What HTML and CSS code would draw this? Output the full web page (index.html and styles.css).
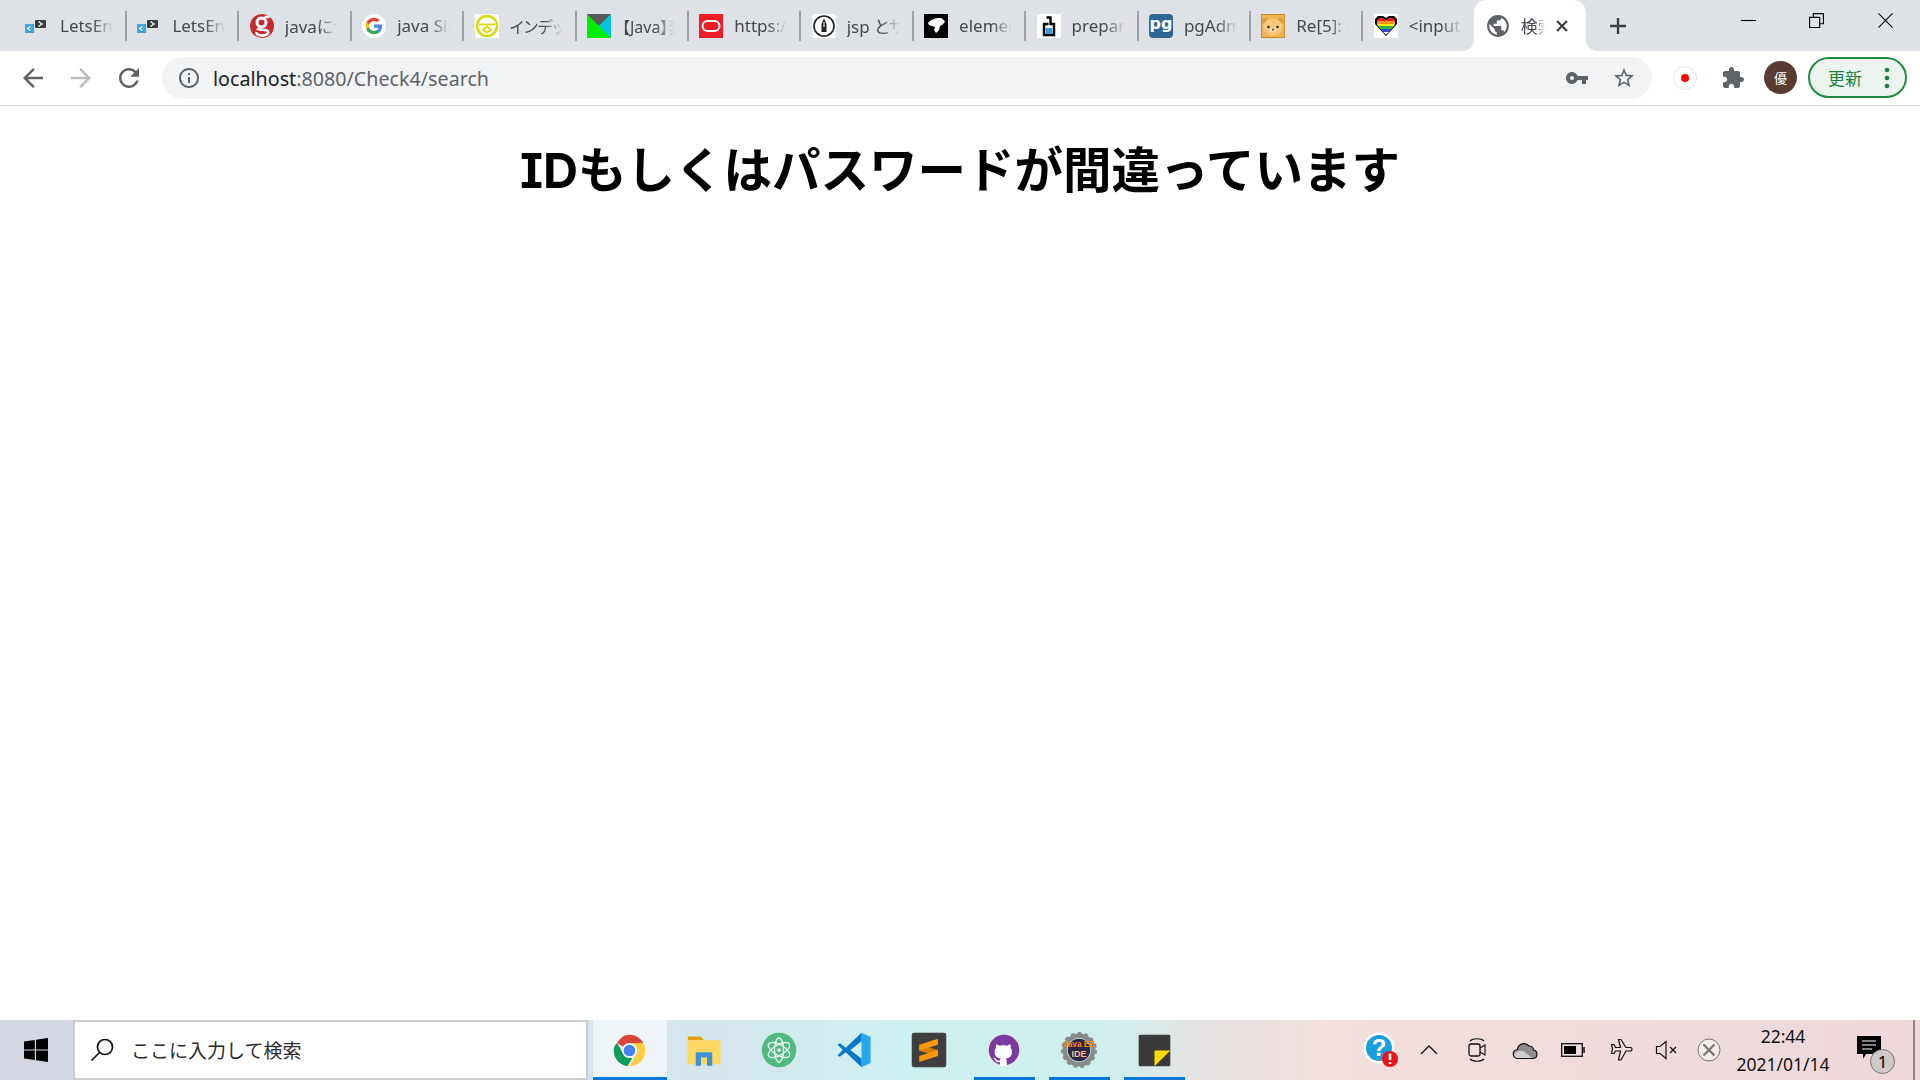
FILE: index.html
```html
<!DOCTYPE html>
<html lang="ja">
<head>
<meta charset="utf-8">
<title>検索</title>
<link rel="stylesheet" href="styles.css">
</head>
<body>
<div class="page">
  <header class="tabstrip">
    <div class="tab">
      <svg class="fav" viewBox="0 0 24 24"><rect x="0" y="10" width="9" height="9" fill="#3ba5e8"/><path d="M5.500 12.500 2.500 14.500 5.500 16.500" fill="none" stroke="#fff" stroke-width="1.200"/><rect x="10" y="6" width="11" height="8" rx="1" fill="#3a3a3a"/><path d="m13.500 7.500 3.500 2.500-3.500 2.500" fill="none" stroke="#fff" stroke-width="1.300"/></svg>
      <span class="tab-title">LetsEnglish</span>
    </div><i class="sep"></i>
    <div class="tab">
      <svg class="fav" viewBox="0 0 24 24"><rect x="0" y="10" width="9" height="9" fill="#3ba5e8"/><path d="M5.500 12.500 2.500 14.500 5.500 16.500" fill="none" stroke="#fff" stroke-width="1.200"/><rect x="10" y="6" width="11" height="8" rx="1" fill="#3a3a3a"/><path d="m13.500 7.500 3.500 2.500-3.500 2.500" fill="none" stroke="#fff" stroke-width="1.300"/></svg>
      <span class="tab-title">LetsEnglish</span>
    </div><i class="sep"></i>
    <div class="tab">
      <svg class="fav" viewBox="0 0 24 24"><circle cx="12" cy="12" r="12" fill="#c62b2b"/><circle cx="11.500" cy="8.500" r="4.500" fill="none" stroke="#fff" stroke-width="3"/><path d="M14.500 3h5M7 14.500c2 2 10 .5 11 3s-3 4.500-6.500 4-5.500-1.500-5-3.500" fill="none" stroke="#fff" stroke-width="2.600"/></svg>
      <span class="tab-title">javaについて調べる</span>
    </div><i class="sep"></i>
    <div class="tab">
      <svg class="fav" viewBox="0 0 24 24"><circle cx="12" cy="12" r="12" fill="#fff"/><path d="M20 12.200c0-.6-.1-1.200-.2-1.700H12v3.300h4.500c-.2 1-.8 1.900-1.700 2.500v2.100h2.700c1.600-1.500 2.500-3.600 2.500-6.200z" fill="#4285f4"/><path d="M12 20.300c2.200 0 4.100-.7 5.500-2l-2.700-2.100c-.7.500-1.700.8-2.800.8-2.200 0-4-1.400-4.700-3.400H4.500v2.100c1.400 2.800 4.200 4.600 7.500 4.600z" fill="#34a853"/><path d="M7.300 13.600c-.4-1-.4-2.200 0-3.200V8.300H4.500c-1 1.900-1 4.400 0 6.300l2.800-1z" fill="#fbbc05"/><path d="M12 7c1.200 0 2.300.4 3.200 1.200l2.400-2.400C16.100 4.400 14.200 3.700 12 3.700c-3.300 0-6.100 1.800-7.500 4.600l2.800 2.100C8 8.400 9.800 7 12 7z" fill="#ea4335"/></svg>
      <span class="tab-title">java Silver</span>
    </div><i class="sep"></i>
    <div class="tab">
      <svg class="fav" viewBox="0 0 24 24"><rect width="24" height="24" fill="#fff"/><circle cx="12" cy="12" r="10" fill="none" stroke="#d8d80c" stroke-width="2.500"/><path d="M4 10.500h16" stroke="#d8d80c" stroke-width="1.800"/><path d="m12 12.500 4 3-4 3-4-3z" fill="none" stroke="#d8d80c" stroke-width="1.800"/></svg>
      <span class="tab-title title-cjk">インデックス</span>
    </div><i class="sep"></i>
    <div class="tab">
      <svg class="fav" viewBox="0 0 24 24"><rect width="24" height="24" fill="#00ef00"/><path d="M0 0h24L12 12z" fill="#5a5a5c"/><path d="M24 0v24L12 12z" fill="#00c4e0"/></svg>
      <span class="tab-title title-cjk">【Java】変数</span>
    </div><i class="sep"></i>
    <div class="tab">
      <svg class="fav" viewBox="0 0 24 24"><rect width="24" height="24" fill="#ee1c25"/><rect x="3.500" y="7" width="17" height="10" rx="5" fill="none" stroke="#fff" stroke-width="2"/></svg>
      <span class="tab-title">https://docs</span>
    </div><i class="sep"></i>
    <div class="tab">
      <svg class="fav" viewBox="0 0 24 24"><rect width="24" height="24" rx="4" fill="#fff"/><circle cx="12" cy="12" r="10" fill="none" stroke="#222" stroke-width="1.600"/><path d="M12 4.500 14.500 10v8h-5v-8z" fill="#222"/><path d="M12 8v5" stroke="#fff" stroke-width="1"/></svg>
      <span class="tab-title">jsp とサーブ</span>
    </div><i class="sep"></i>
    <div class="tab">
      <svg class="fav" viewBox="0 0 24 24"><rect width="24" height="24" fill="#000"/><path d="M4 9c2-3 7-5 12-5 2 0 4 2 5 4l-3 3-2 1-1 4-3 3-2-3 1-3-3-1-3-1z" fill="#fff"/></svg>
      <span class="tab-title">element</span>
    </div><i class="sep"></i>
    <div class="tab">
      <svg class="fav" viewBox="0 0 24 24"><rect width="24" height="24" fill="#fff"/><path d="M9.500 3.500h4v6.500H17v11H7V10h4.500" fill="none" stroke="#000" stroke-width="2.400"/><rect x="8.500" y="14" width="7" height="6" fill="#3a9ad9"/></svg>
      <span class="tab-title">prepared</span>
    </div><i class="sep"></i>
    <div class="tab">
      <svg class="fav" viewBox="0 0 24 24"><rect width="24" height="24" rx="4" fill="#2f6792"/><text x="12" y="15" class="pg">pg</text></svg>
      <span class="tab-title">pgAdmin</span>
    </div><i class="sep"></i>
    <div class="tab">
      <svg class="fav" viewBox="0 0 24 24"><rect width="24" height="24" fill="#efb354"/><rect x=".5" y=".5" width="23" height="23" fill="none" stroke="#c98a2e"/><circle cx="4.500" cy="7" r="3" fill="#d99a3e"/><circle cx="19.500" cy="7" r="3" fill="#d99a3e"/><ellipse cx="12" cy="13" rx="10" ry="8.500" fill="#f6c878"/><circle cx="7.500" cy="13" r="1.300" fill="#332"/><circle cx="16.500" cy="13" r="1.300" fill="#332"/><ellipse cx="12" cy="16" rx="3" ry="2.300" fill="#fbe3b6"/><circle cx="12" cy="15.500" r="1" fill="#332"/></svg>
      <span class="tab-title">Re[5]: HTML</span>
    </div><i class="sep"></i>
    <div class="tab">
      <svg class="fav" viewBox="0 0 24 24"><rect width="24" height="24" fill="#fff"/><path d="M12 22 1 10V5l3-3h5l3 2 3-2h5l3 3v5z" fill="#000"/><path d="M3 6.500 5 4h4l3 2 3-2h4l2 2.500V7H3z" fill="#e8202a"/><path d="M3 7h18v3H3z" fill="#f7941d"/><path d="M3 10h18l-1 2H4z" fill="#fcee21"/><path d="M4 12h16l-2.500 3h-11z" fill="#39b54a"/><path d="M6.500 15h11L15 18H9z" fill="#2e4fd0"/><path d="M9 18h6l-3 2.500z" fill="#fff"/></svg>
      <span class="tab-title">&lt;input type</span>
    </div>
    <div class="tab tab-active">
      <svg class="fav" viewBox="1 1 22 22"><path fill="#5f6368" d="M12 2C6.480 2 2 6.480 2 12s4.480 10 10 10 10-4.480 10-10S17.520 2 12 2zm-1 17.930c-3.950-.49-7-3.850-7-7.930 0-.62.08-1.210.21-1.790L9 15v1c0 1.100.9 2 2 2v1.930zm6.900-2.540c-.26-.81-1-1.390-1.900-1.390h-1v-3c0-.55-.45-1-1-1H8v-2h2c.55 0 1-.45 1-1V7h2c1.100 0 2-.9 2-2v-.41c2.930 1.190 5 4.060 5 7.410 0 2.080-.8 3.970-2.100 5.390z"/></svg>
      <span class="tab-title title-short">検索結果</span>
      <svg class="tab-close" viewBox="0 0 14 14"><path d="m2 2 10 10M12 2 2 12" stroke="#3c4043" stroke-width="2.200"/></svg>
    </div>
    <svg class="newtab" viewBox="0 0 20 20"><path d="M10 2v16M2 10h16" stroke="#3c4043" stroke-width="2.400"/></svg>
    <div class="winctl">
      <div class="winbtn"><svg class="winico" viewBox="0 0 16 16"><path d="M0 8h16" stroke="#000" stroke-width="1.200"/></svg></div>
      <div class="winbtn"><svg class="winico" viewBox="0 0 16 16"><path d="M.6 4.600h10.800v10.800H.6zM4.600 4.600V.6h10.800v10.800h-4" fill="none" stroke="#000" stroke-width="1.200"/></svg></div>
      <div class="winbtn"><svg class="winico" viewBox="0 0 16 16"><path d="m.5.500 15 15M15.500.500l-15 15" stroke="#000" stroke-width="1.100"/></svg></div>
    </div>
  </header>

  <nav class="toolbar">
    <div class="navbtn"><svg class="navico" viewBox="4 4 16 16"><path fill="#5f6368" d="M20 11H7.830l5.590-5.590L12 4l-8 8 8 8 1.410-1.410L7.830 13H20v-2z"/></svg></div>
    <div class="navbtn"><svg class="navico" viewBox="4 4 16 16"><path fill="#babcbe" d="M4 11h12.170l-5.590-5.590L12 4l8 8-8 8-1.410-1.410L16.170 13H4v-2z"/></svg></div>
    <div class="navbtn"><svg class="navico" viewBox="4 4 16 16"><path fill="#5f6368" d="M17.650 6.350C16.200 4.900 14.210 4 12 4c-4.420 0-7.990 3.580-7.990 8s3.570 8 7.990 8c3.730 0 6.840-2.550 7.730-6h-2.080c-.82 2.330-3.040 4-5.650 4-3.310 0-6-2.690-6-6s2.690-6 6-6c1.660 0 3.140.69 4.220 1.780L13 11h7V4l-2.350 2.350z"/></svg></div>
    <div class="omnibox">
      <svg class="ico24" viewBox="0 0 24 24"><path fill="#5f6368" d="M11 7h2v2h-2zm0 4h2v6h-2zm1-9C6.480 2 2 6.480 2 12s4.480 10 10 10 10-4.480 10-10S17.520 2 12 2zm0 18c-4.410 0-8-3.590-8-8s3.590-8 8-8 8 3.590 8 8-3.590 8-8 8z"/></svg>
      <span class="url"><span class="url-host">localhost</span>:8080/Check4/search</span>
      <svg class="ico24 om-key" viewBox="0 0 24 24"><path fill="#5f6368" d="M12.650 10C11.830 7.670 9.610 6 7 6c-3.310 0-6 2.690-6 6s2.690 6 6 6c2.610 0 4.830-1.670 5.650-4H17v4h4v-4h2v-4H12.650zM7 14c-1.100 0-2-.9-2-2s.9-2 2-2 2 .9 2 2-.9 2-2 2z"/></svg>
      <svg class="ico24" viewBox="0 0 24 24"><path fill="#5f6368" d="M22 9.240l-7.190-.62L12 2 9.190 8.630 2 9.240l5.460 4.730L5.820 21 12 17.270 18.180 21l-1.630-7.030L22 9.240zM12 15.400l-3.760 2.270 1-4.280-3.320-2.880 4.380-.38L12 6.100l1.710 4.040 4.380.38-3.320 2.880 1 4.280L12 15.400z"/></svg>
    </div>
    <div class="record"><i class="record-dot"></i></div>
    <svg class="ico24 puzzle" viewBox="0 0 24 24"><path fill="#5f6368" d="M20.500 11H19V7c0-1.100-.9-2-2-2h-4V3.500C13 2.120 11.880 1 10.500 1S8 2.120 8 3.500V5H4c-1.100 0-1.990.9-1.990 2v3.800H3.500c1.490 0 2.700 1.210 2.700 2.700s-1.210 2.700-2.700 2.700H2V20c0 1.100.9 2 2 2h3.800v-1.500c0-1.490 1.210-2.700 2.700-2.700 1.490 0 2.700 1.210 2.700 2.700V22H17c1.100 0 2-.9 2-2v-4h1.500c1.380 0 2.500-1.120 2.500-2.500S21.880 11 20.500 11z"/></svg>
    <div class="avatar">優</div>
    <div class="update"><span>更新</span><svg class="dots" viewBox="0 0 6 22"><circle cx="3" cy="3" r="2.300"/><circle cx="3" cy="11" r="2.300"/><circle cx="3" cy="19" r="2.300"/></svg></div>
  </nav>

  <main class="content">
    <h1 class="message">IDもしくはパスワードが間違っています</h1>
  </main>

  <footer class="taskbar">
    <div class="start"><svg class="win-logo" viewBox="0 0 24 24"><path fill="#000" d="M0 3.400 10.800 1.900v9.500H0zM12 1.700 24 0v11.400H12zM0 12.600h10.800v9.500L0 20.600zM12 12.600h12V24l-12-1.700z"/></svg></div>
    <div class="search">
      <svg class="search-ico" viewBox="0 0 24 24"><circle cx="15" cy="9" r="7.500" fill="none" stroke="#111" stroke-width="1.700"/><path d="M9.500 14.500 1.500 22.500" stroke="#111" stroke-width="1.700"/></svg>
      <span class="search-text">ここに入力して検索</span>
    </div>
    <div class="apps">
      <div class="app app-active">
        <svg class="appico" viewBox="0 0 48 48"><path d="M24 24 6 13C10 6 16.500 1 24 1c8.500 0 16 4.700 20 12H24z" fill="#db4437"/><path d="M24 47C11.300 47 1 36.700 1 24c0-4 1-7.800 5-11l11 19 11 3-7 12z" fill="#0f9d58"/><path d="M44 13c2 3.300 3 7 3 11 0 12.700-10.300 23-23 23l10-18-10-16z" fill="#ffcd40"/><circle cx="24" cy="24" r="11" fill="#fff"/><circle cx="24" cy="24" r="8.500" fill="#4285f4"/></svg>
      </div>
      <div class="app">
        <svg class="appico app-lg" viewBox="0 0 48 48"><path d="M2 6h17l5 5H3z" fill="#e0a106"/><rect x="2" y="11" width="44" height="32" rx="1" fill="#ffd862"/><path d="M13 45V27h22v18h-7V34h-8v11z" fill="#3f92d8"/></svg>
      </div>
      <div class="app">
        <svg class="appico app-lg" viewBox="0 0 48 48"><circle cx="24" cy="24" r="23" fill="#4fb97f"/><g fill="none" stroke="#e9f7ef" stroke-width="1.800"><ellipse cx="24" cy="24" rx="16" ry="7" transform="rotate(30 24 24)"/><ellipse cx="24" cy="24" rx="16" ry="7" transform="rotate(-30 24 24)"/><ellipse cx="24" cy="24" rx="6" ry="16"/></g><circle cx="24" cy="24" r="2.500" fill="#e9f7ef"/></svg>
      </div>
      <div class="app">
        <svg class="appico app-lg" viewBox="0 0 100 100"><path d="M71 2 L96 14 V86 L71 98z" fill="#24a8f0"/><path d="M71 2 L27 44 L11 31 L4 35 L19 50 L4 65 L11 69 L27 56 L71 98 V74 L40 50 L71 26z" fill="#0877c6"/></svg>
      </div>
      <div class="app">
        <svg class="appico app-lg" viewBox="0 0 48 48"><rect x="1" y="1" width="46" height="46" rx="3" fill="#3f3f3f"/><path d="M11 17 36 24v8L11 25z" fill="#d97f00"/><path d="M36 9v8L11 25v-8z" fill="#ff9800"/><path d="M36 24v8L11 40v-8z" fill="#ff9800"/></svg>
      </div>
      <div class="app app-running">
        <svg class="appico app-md" viewBox="0 0 48 48"><circle cx="24" cy="24" r="23.500" fill="#e4e4e8"/><circle cx="24" cy="24" r="21.500" fill="#7b3a9e"/><g transform="translate(5 8) scale(2.400)"><path fill="#fff" d="M5.500 16v-2.200c-2 .37-2.520-.49-2.680-.94-.09-.23-.48-.94-.82-1.130-.28-.15-.68-.52-.01-.53.63-.01 1.080.58 1.230.82.72 1.210 1.870.87 2.330.66.07-.52.28-.87.51-1.070-1.780-.2-3.640-.89-3.640-3.950 0-.87.31-1.590.82-2.150-.08-.2-.36-1.020.08-2.120 0 0 .67-.21 2.200.82.64-.18 1.320-.27 2-.27s1.360.09 2 .27c1.530-1.040 2.200-.82 2.200-.82.44 1.100.16 1.920.08 2.120.51.56.82 1.270.82 2.150 0 3.070-1.870 3.750-3.650 3.950.29.25.54.730.54 1.480V16z"/></g></svg>
      </div>
      <div class="app app-running">
        <svg class="appico app-lg" viewBox="0 0 48 48"><circle cx="24" cy="24" r="19" fill="none" stroke="#8a8a8a" stroke-width="6"/><circle cx="24" cy="24" r="22" fill="none" stroke="#8a8a8a" stroke-width="4" stroke-dasharray="5 4.200"/><circle cx="24" cy="24" r="15" fill="#2c2545"/><text x="24" y="20" class="ee ee-a">Java EE</text><text x="24" y="33" class="ee ee-b">IDE</text></svg>
      </div>
      <div class="app app-running">
        <svg class="appico" viewBox="0 0 48 48"><rect x="1" y="1" width="46" height="46" rx="2" fill="#3a3a3a"/><path d="M24 24H47L24 47z" fill="#ffdc00"/></svg>
      </div>
    </div>
    <div class="tray">
      <div class="tray-item"><svg class="ico-help" viewBox="0 0 36 36"><circle cx="16" cy="16" r="15.500" fill="#fff"/><circle cx="16" cy="16" r="13" fill="#1a9ede"/><text x="16" y="24" class="help-q">?</text><circle cx="27" cy="27" r="8" fill="#e8141c"/><path d="M27 21.500v6.500M27 30v2" stroke="#fff" stroke-width="2.600"/></svg></div>
      <div class="tray-item"><svg class="ico20" viewBox="0 0 20 20"><path d="m2 14 8-8 8 8" fill="none" stroke="#111" stroke-width="1.300"/></svg></div>
      <div class="tray-item"><svg class="ico-cam" viewBox="0 0 20 28"><rect x="2" y="8" width="11" height="12" rx="2" fill="none" stroke="#111" stroke-width="1.300"/><path d="m13 12 5-3v10l-5-3M3 5c3-3 11-3 14 0M3 23c3 3 11 3 14 0" fill="none" stroke="#111" stroke-width="1.100"/></svg></div>
      <div class="tray-item"><svg class="ico-cloud" viewBox="0 0 26 20"><path d="M6 18.500a4.500 4.500 0 0 1-.5-9A6.500 6.500 0 0 1 17 6a4.500 4.500 0 0 1 4.500 4 4.300 4.300 0 0 1-.5 8.500z" fill="#8d8d8d" stroke="#111" stroke-width="1.200"/><path d="M6 18c-2 0-4-2-4-4 3-3 8-5 12-1l6 5z" fill="#cfcfcf"/></svg></div>
      <div class="tray-item"><svg class="ico-batt" viewBox="0 0 24 14"><rect x=".7" y=".7" width="20.600" height="12.600" fill="none" stroke="#111" stroke-width="1.300"/><rect x="3" y="3" width="12" height="8" fill="#000"/><rect x="22" y="4" width="2" height="6" fill="#444"/></svg></div>
      <div class="tray-item"><svg class="ico24" viewBox="0 0 24 24"><path d="M9.500 1.500h2.500l5 8h4.500c2 0 2 3.500 0 3.500H17l-5 9H9.500l2-9H6.500l-1.500 2.500H2.500l1-4.500-1-4.500H5l1.500 3h5z" fill="none" stroke="#111" stroke-width="1.200"/></svg></div>
      <div class="tray-item tray-sound"><svg class="ico-sound" viewBox="0 0 24 20"><path d="M1.500 6.500h3.500l6-5v17l-6-5H1.500z" fill="none" stroke="#111" stroke-width="1.200"/><path d="m15 7 6 6M21 7l-6 6" stroke="#111" stroke-width="1.300"/></svg></div>
      <div class="tray-item tray-x"><svg class="ico24" viewBox="0 0 24 24"><circle cx="12" cy="12" r="11" fill="#f4eaea" stroke="#777" stroke-width="1"/><path d="m6.500 6.500 11 11M17.500 6.500l-11 11" stroke="#777" stroke-width="2.200"/></svg></div>
      <div class="clock"><span>22:44</span><span>2021/01/14</span></div>
      <div class="notify">
        <svg class="notify-ico" viewBox="0 0 24 24"><path d="M0 0h24v18H9l-3 5v-5H0z" fill="#000"/><path d="M5 5h14M5 9h14M5 13h10" stroke="#fff" stroke-width="1.200"/></svg>
        <span class="notify-badge">1</span>
      </div>
      <i class="show-desktop"></i>
    </div>
  </footer>
</div>
</body>
</html>
```

FILE: styles.css
```css
* { box-sizing: border-box; }
html, body { margin: 0; height: 100%; }
body {
  font-family: "Noto Sans", "Noto Sans CJK JP", sans-serif;
  background: #fff;
  overflow: hidden;
}
.page { height: 100vh; display: flex; flex-direction: column; }

/* tab strip */
.tabstrip {
  height: 51px;
  flex: none;
  display: flex;
  align-items: center;
  padding-left: 14.6px;
  background: #dee1e6;
}
.tab {
  width: 110.4px;
  height: 51px;
  flex: none;
  display: flex;
  align-items: center;
  gap: 11px;
  padding-left: 10.4px;
}
.sep { width: 2px; height: 30px; flex: none; background: #9da0a6; }
.fav { width: 24px; height: 24px; flex: none; }
.tab-title {
  width: 53px;
  flex: none;
  overflow: hidden;
  white-space: nowrap;
  font-size: 17px;
  color: #45484e;
  font-feature-settings: "palt";
  -webkit-mask-image: linear-gradient(to right, #000 62%, transparent 100%);
  mask-image: linear-gradient(to right, #000 62%, transparent 100%);
}
.title-cjk { font-size: 16px; }
.title-short { width: 24px; }
.tab-active {
  position: relative;
  width: 112px;
  padding-left: 12px;
  background: #fff;
  border-radius: 13px 13px 0 0;
}
.tab-active::before,
.tab-active::after {
  content: "";
  position: absolute;
  bottom: 0;
  width: 12px;
  height: 12px;
}
.tab-active::before { left: -12px; background: radial-gradient(circle at 0 0, transparent 12px, #fff 12.5px); }
.tab-active::after { right: -12px; background: radial-gradient(circle at 100% 0, transparent 12px, #fff 12.5px); }
.tab-close { width: 14px; height: 14px; flex: none; margin-left: -1px; }
.newtab { width: 20px; height: 20px; flex: none; margin-left: 22px; }
.winctl { margin-left: auto; align-self: flex-start; height: 41px; display: flex; }
.winbtn { width: 68px; display: flex; align-items: center; justify-content: center; }
.winbtn:last-child { width: 70px; }
.winico { width: 15px; height: 15px; }
.pg { font: 700 16px "DejaVu Sans", sans-serif; fill: #fff; text-anchor: middle; }

/* toolbar */
.toolbar {
  height: 55px;
  flex: none;
  display: flex;
  align-items: center;
  padding: 0 13px 1px 9px;
  background: #fff;
  border-bottom: 1px solid #dadce0;
}
.navbtn { width: 48px; display: flex; justify-content: center; }
.navico { width: 20px; height: 20px; }
.ico24 { width: 24px; height: 24px; flex: none; }
.omnibox {
  flex: 1;
  height: 42px;
  margin-left: 9px;
  padding: 0 16px 0 15px;
  display: flex;
  align-items: center;
  border-radius: 21px;
  background: #f1f3f4;
}
.url { margin-left: 12px; padding-top: 1px; font-size: 19.700px; color: #5f6368; white-space: nowrap; }
.url-host { color: #202124; }
.om-key { margin-left: auto; margin-right: 23px; }
.record {
  width: 24px;
  height: 24px;
  flex: none;
  margin-left: 21px;
  display: flex;
  align-items: center;
  justify-content: center;
  border-radius: 50%;
  border: 1px solid #e3e3e3;
}
.record-dot { width: 8px; height: 8px; border-radius: 50%; background: #f00; }
.puzzle { margin-left: 24px; }
.avatar {
  width: 33px;
  height: 33px;
  flex: none;
  margin-left: 19px;
  display: flex;
  align-items: center;
  justify-content: center;
  border-radius: 50%;
  background: #5a3b32;
  color: #fff;
  font-size: 13px;
}
.update {
  width: 99px;
  height: 41px;
  flex: none;
  margin-left: 11px;
  padding: 0 15px 0 18px;
  display: flex;
  align-items: center;
  justify-content: space-between;
  border: 2px solid #1e8e3e;
  border-radius: 21px;
  background: #edf4ef;
  color: #188038;
  font-size: 17px;
}
.dots { width: 6px; height: 22px; fill: #188038; }

/* page content */
.content { flex: 1; min-height: 0; background: #fff; }
.message {
  margin: 32px 0 0;
  font: 700 48.500px/66px Inter, "Noto Sans CJK JP", sans-serif;
  font-feature-settings: "cv08";
  color: #000;
  text-align: center;
}

/* taskbar */
.taskbar {
  height: 60px;
  flex: none;
  display: flex;
  background: linear-gradient(to right, #d3d6e3 0, #d4d8e4 300px, #d6e6ec 600px, #d4e6ec 720px, #cdf0f0 900px, #cdf0ef 1100px, #e6e2e2 1200px, #f2dfdc 1340px, #efdadb 1700px, #eed8da 1920px);
}
.start { width: 73px; padding-right: 2px; display: flex; align-items: center; justify-content: center; }
.win-logo { width: 24px; height: 24px; }
.search {
  width: 515px;
  padding-left: 15px;
  display: flex;
  align-items: center;
  gap: 17px;
  background: #fff;
  border: 2px solid #cccccc;
}
.search-ico { width: 24px; height: 24px; flex: none; }
.search-text { font-size: 19px; color: #2b2b2b; white-space: nowrap; }
.apps { margin-left: 4px; display: flex; }
.app {
  position: relative;
  width: 75px;
  padding-right: 1px;
  display: flex;
  align-items: center;
  justify-content: center;
}
.appico { width: 33px; height: 33px; }
.app-lg { width: 36px; height: 36px; }
.app-md { width: 34px; height: 34px; }
.app-active { background: #eef4f8; width: 74px; margin-left: 1px; padding-right: 2px; }
.app-active::after,
.app-running::after {
  content: "";
  position: absolute;
  bottom: 0;
  height: 3px;
  background: #0078d7;
}
.app-active::after { left: 0; right: 0; }
.app-running::after { left: 7px; right: 7px; }
.ee { font-family: "Liberation Sans", sans-serif; font-weight: 700; fill: #ff8a00; text-anchor: middle; }
.ee-a { font-size: 11px; }
.ee-b { font-size: 12px; fill: #f0c48a; }

.tray { margin-left: auto; display: flex; align-items: stretch; }
.tray-item { width: 48px; display: flex; align-items: center; justify-content: center; }
.tray-sound { width: 44px; }
.tray-x { width: 40px; }
.ico20 { width: 20px; height: 20px; }
.ico-help { width: 36px; height: 36px; }
.help-q { font: 700 24px "Liberation Sans", sans-serif; fill: #fff; text-anchor: middle; }
.ico-cam { width: 20px; height: 28px; }
.ico-cloud { width: 26px; height: 20px; }
.ico-batt { width: 24px; height: 14px; }
.ico-sound { width: 24px; height: 20px; }
.clock {
  width: 108px;
  display: flex;
  flex-direction: column;
  align-items: center;
  justify-content: center;
  gap: 4px;
  font-size: 17.500px;
  line-height: 24px;
  color: #111;
}
.notify {
  position: relative;
  width: 66px;
  margin-right: 10px;
  display: flex;
  align-items: center;
  justify-content: center;
}
.notify-ico { width: 24px; height: 24px; margin-top: -4px; margin-left: -2px; }
.notify-badge {
  position: absolute;
  left: 33px;
  top: 29px;
  width: 25px;
  height: 25px;
  display: flex;
  align-items: center;
  justify-content: center;
  border-radius: 50%;
  border: 1px solid #777;
  background: #cfc9c9;
  color: #000;
  font-size: 17px;
}
.show-desktop { width: 2px; margin-right: 5px; background: #8f8a8c; }
```
